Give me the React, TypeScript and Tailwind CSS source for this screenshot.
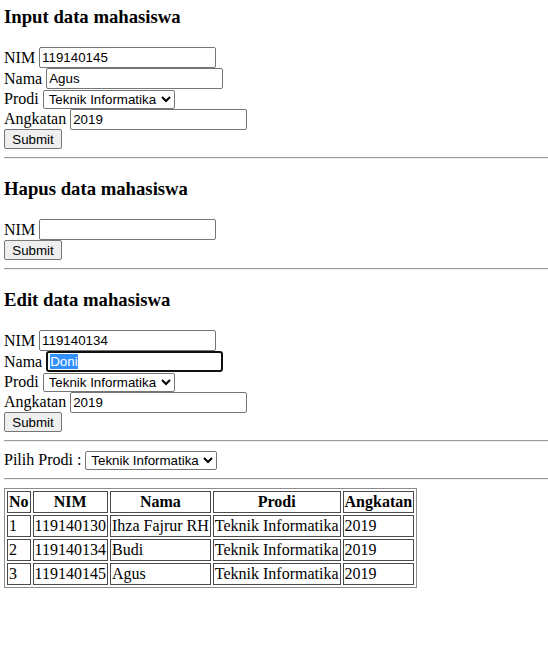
import React from 'react';

const serif = { fontFamily: '"Liberation Serif", "Times New Roman", serif' };

const inputCls =
  "w-[177px] h-[21px] border border-[#767676] rounded-[2px] bg-white px-[2px] text-[13.33px] text-black outline-none font-['Liberation_Sans',Arial,sans-serif]";

const selectCls =
  "w-[132px] h-[19px] border border-[#767676] rounded-[2px] bg-white pl-[1px] text-[13.33px] text-black font-['Liberation_Sans',Arial,sans-serif]";

const Field = ({ label, value, h = "h-[21px]" }: { label: string; value?: string; h?: string }) => (
  <div className={`flex items-center gap-[4px] ${h}`}>
    <span>{label}</span>
    <input className={inputCls} defaultValue={value} />
  </div>
);

const ProdiSelect = () => (
  <select className={selectCls} defaultValue="TI">
    <option value="TI">Teknik Informatika</option>
    <option value="SI">Sistem Informasi</option>
  </select>
);

const SubmitButton = () => (
  <div className="flex items-center h-[20px]">
    <button className="w-[58px] h-[20px] border border-[#767676] rounded-[2px] bg-[#efefef] text-[13.33px] text-black font-['Liberation_Sans',Arial,sans-serif]">
      Submit
    </button>
  </div>
);

const Divider = () => <hr className="my-[8px] h-0 border-t border-b border-t-[#9a9a9a] border-b-[#eeeeee]" />;

const Heading = ({ children, top = "mt-[19px]" }: { children: React.ReactNode; top?: string }) => (
  <h3 className={`${top} mb-[19px] text-[18.72px] leading-[22px] font-bold`}>{children}</h3>
);

const rows = [
  ["1", "119140130", "Ihza Fajrur RH", "Teknik Informatika", "2019"],
  ["2", "119140134", "Budi", "Teknik Informatika", "2019"],
  ["3", "119140145", "Agus", "Teknik Informatika", "2019"],
];

export default function App() {
  return (
    <div className="min-h-[665px] bg-white pl-[4px] text-[16px] text-black" style={serif}>
      <Heading top="mt-[6px]">Input data mahasiswa</Heading>
      <form onSubmit={(e) => e.preventDefault()}>
        <Field label="NIM" value="119140145" />
        <Field label="Nama" value="Agus" />
        <div className="flex items-center gap-[4px] h-[20px]">
          <span>Prodi</span>
          <ProdiSelect />
        </div>
        <Field label="Angkatan" value="2019" h="h-[20px]" />
        <SubmitButton />
      </form>
      <Divider />

      <Heading>Hapus data mahasiswa</Heading>
      <form onSubmit={(e) => e.preventDefault()}>
        <Field label="NIM" />
        <SubmitButton />
      </form>
      <Divider />

      <Heading>Edit data mahasiswa</Heading>
      <form onSubmit={(e) => e.preventDefault()}>
        <Field label="NIM" value="119140134" />
        <div className="flex items-center gap-[4px] h-[21px]">
          <span>Nama</span>
          {/* focused field with selected text */}
          <div className="w-[177px] h-[21px] border-2 border-[#101010] rounded-[3px] bg-white px-[2px] flex items-center text-[13.33px] font-['Liberation_Sans',Arial,sans-serif]">
            <span className="bg-[#3390ff] text-white leading-[15px]">Doni</span>
          </div>
        </div>
        <div className="flex items-center gap-[4px] h-[20px]">
          <span>Prodi</span>
          <ProdiSelect />
        </div>
        <Field label="Angkatan" value="2019" h="h-[20px]" />
        <SubmitButton />
      </form>
      <Divider />

      <div className="flex items-center gap-[4px] h-[20px]">
        <span>Pilih Prodi :</span>
        <ProdiSelect />
      </div>
      <Divider />

      <table className="border-separate border-spacing-[2px] border border-[#8c8c8c]">
        <thead>
          <tr>
            {["No", "NIM", "Nama", "Prodi", "Angkatan"].map((h) => (
              <th key={h} className="border border-[#4a4a4a] p-[1px] leading-[18px] font-bold text-center whitespace-nowrap">
                {h}
              </th>
            ))}
          </tr>
        </thead>
        <tbody>
          {rows.map((r) => (
            <tr key={r[0]}>
              {r.map((c, i) => (
                <td key={i} className="border border-[#4a4a4a] p-[1px] leading-[18px] whitespace-nowrap">
                  {c}
                </td>
              ))}
            </tr>
          ))}
        </tbody>
      </table>
    </div>
  );
}
